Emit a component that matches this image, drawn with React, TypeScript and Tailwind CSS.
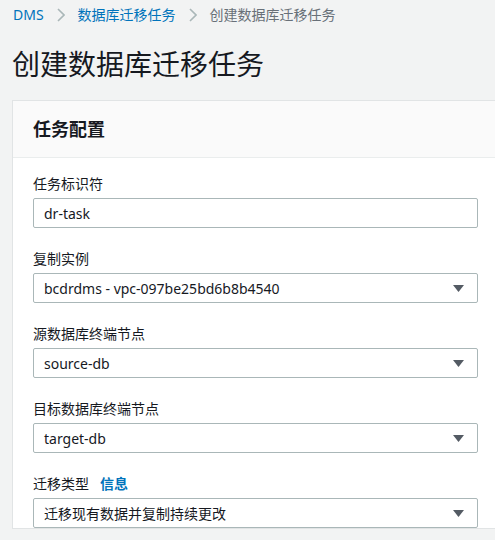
import React from "react";

const font = { fontFamily: '"Noto Sans", "Noto Sans CJK SC", sans-serif' };

function Chevron() {
  return (
    <svg className="mx-[13px] w-[8px] h-[14px]" viewBox="0 0 8 14" fill="none">
      <polyline points="1,1 7,7 1,13" stroke="#aab7b8" strokeWidth="1.6" />
    </svg>
  );
}

function Caret() {
  return (
    <svg className="w-[11px] h-[7px]" viewBox="0 0 11 7">
      <polygon points="0,0 11,0 5.5,7" fill="#545b64" />
    </svg>
  );
}

function Field({ label, value, select, info }: { label: string; value: string; select?: boolean; info?: boolean }) {
  return (
    <div>
      <div className="h-[20px] leading-[20px] text-[14px] text-[#16191f] mb-1 flex items-center">
        {label}
        {info && <span className="ml-[11px] font-bold text-[#0073bb]">信息</span>}
      </div>
      <div className="h-[30px] border border-[#aab7b8] rounded-[2px] bg-white flex items-center pl-[10px] pr-[13px] text-[14px] text-[#16191f]">
        <span className="flex-1">{value}</span>
        {select && <Caret />}
      </div>
    </div>
  );
}

export default function App() {
  return (
    <div className="w-[495px] h-[540px] overflow-hidden bg-[#f2f3f3]" style={font}>
      <div className="h-[29px] pl-[13px] flex items-center text-[14px]">
        <span className="text-[#0073bb]">DMS</span>
        <Chevron />
        <span className="text-[#0073bb]">数据库迁移任务</span>
        <Chevron />
        <span className="text-[#687078]">创建数据库迁移任务</span>
      </div>
      <h1 className="pl-[12px] mt-[15px] h-[40px] leading-[40px] text-[28px] text-[#16191f]">创建数据库迁移任务</h1>
      <div className="ml-[12px] mt-[16px] w-[487px] border border-[#e1e4e5] bg-white">
        <div className="h-[57px] bg-[#fafafa] border-b border-[#eaeded] flex items-center pl-[20px] pt-[1px]">
          <span className="text-[18px] font-bold text-[#16191f]">任务配置</span>
        </div>
        <div className="px-[20px] pt-[16px] flex flex-col gap-[21px]">
          <Field label="任务标识符" value="dr-task" />
          <Field label="复制实例" value="bcdrdms - vpc-097be25bd6b8b4540" select />
          <Field label="源数据库终端节点" value="source-db" select />
          <Field label="目标数据库终端节点" value="target-db" select />
          <Field label="迁移类型" value="迁移现有数据并复制持续更改" select info />
        </div>
      </div>
    </div>
  );
}
